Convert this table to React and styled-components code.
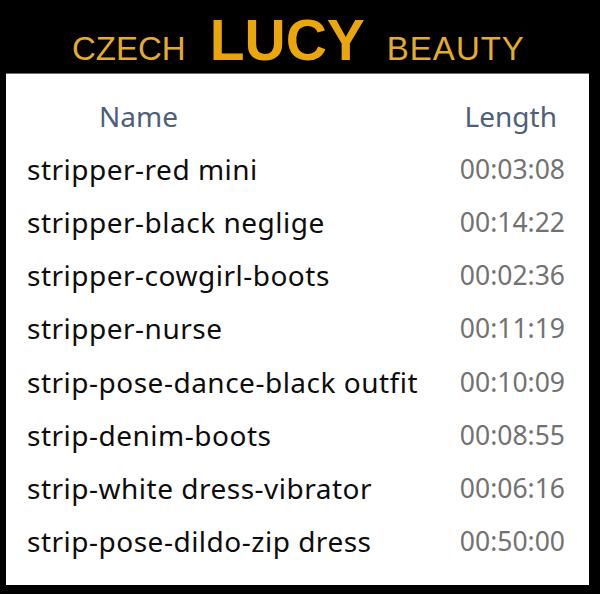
import React from "react";
import styled, { createGlobalStyle } from "styled-components";

const Global = createGlobalStyle`
  html, body { margin: 0; padding: 0; background: #000; }
  body { width: 600px; height: 594px; overflow: hidden; }
`;

const Page = styled.div`
  width: 600px;
  height: 594px;
  background: #000;
  display: flex;
  flex-direction: column;
`;

const Title = styled.header`
  height: 73px;
  display: flex;
  align-items: baseline;
  padding: 12px 0 0 72px;
  box-sizing: border-box;
  font-family: "Liberation Sans", Arial, sans-serif;
  line-height: 1;
`;

const TitleWord = styled.span`
  color: ${(p) => (p.$big ? "#eba60c" : "#e3ac2c")};
  font-size: ${(p) => (p.$big ? "57px" : "33px")};
  font-weight: ${(p) => (p.$big ? 700 : 400)};
  letter-spacing: ${(p) => p.$spacing || 0}px;
  margin-left: ${(p) => p.$gap || 0}px;
`;

const Panel = styled.section`
  margin-left: 6px;
  width: 583px;
  height: 512px;
  background: #fff;
  border-top: 1px solid #6a6a6a;
  box-sizing: border-box;
  display: grid;
  grid-template-columns: 1fr auto;
  grid-auto-rows: 53.2px;
  align-content: start;
  padding: 15px 24px 0 21px;
  font-family: "Noto Sans", "Open Sans", sans-serif;
`;

const HeadCell = styled.div`
  display: flex;
  align-items: center;
  font-size: 28px;
  color: #4f5e7a;
  padding-left: ${(p) => p.$indent || 0}px;
  padding-right: ${(p) => p.$endPad || 0}px;
  justify-content: ${(p) => (p.$right ? "flex-end" : "flex-start")};
`;

const NameCell = styled.div`
  display: flex;
  align-items: center;
  font-size: 28px;
  letter-spacing: 0.5px;
  color: #0d0d0d;
  white-space: nowrap;
`;

const LengthCell = styled.div`
  display: flex;
  align-items: center;
  justify-content: flex-end;
  font-size: 26.5px;
  color: #727272;
`;

const rows = [
  ["stripper-red mini", "00:03:08"],
  ["stripper-black neglige", "00:14:22"],
  ["stripper-cowgirl-boots", "00:02:36"],
  ["stripper-nurse", "00:11:19"],
  ["strip-pose-dance-black outfit", "00:10:09"],
  ["strip-denim-boots", "00:08:55"],
  ["strip-white dress-vibrator", "00:06:16"],
  ["strip-pose-dildo-zip dress", "00:50:00"],
];

export default function App() {
  return (
    <Page>
      <Global />
      <Title>
        <TitleWord>CZECH</TitleWord>
        <TitleWord $big $gap={24}>LUCY</TitleWord>
        <TitleWord $gap={22} $spacing={1}>BEAUTY</TitleWord>
      </Title>
      <Panel>
        <HeadCell $indent={72}>Name</HeadCell>
        <HeadCell $right $endPad={8}>Length</HeadCell>
        {rows.map(([n, l]) => (
          <React.Fragment key={n}>
            <NameCell>{n}</NameCell>
            <LengthCell>{l}</LengthCell>
          </React.Fragment>
        ))}
      </Panel>
    </Page>
  );
}
